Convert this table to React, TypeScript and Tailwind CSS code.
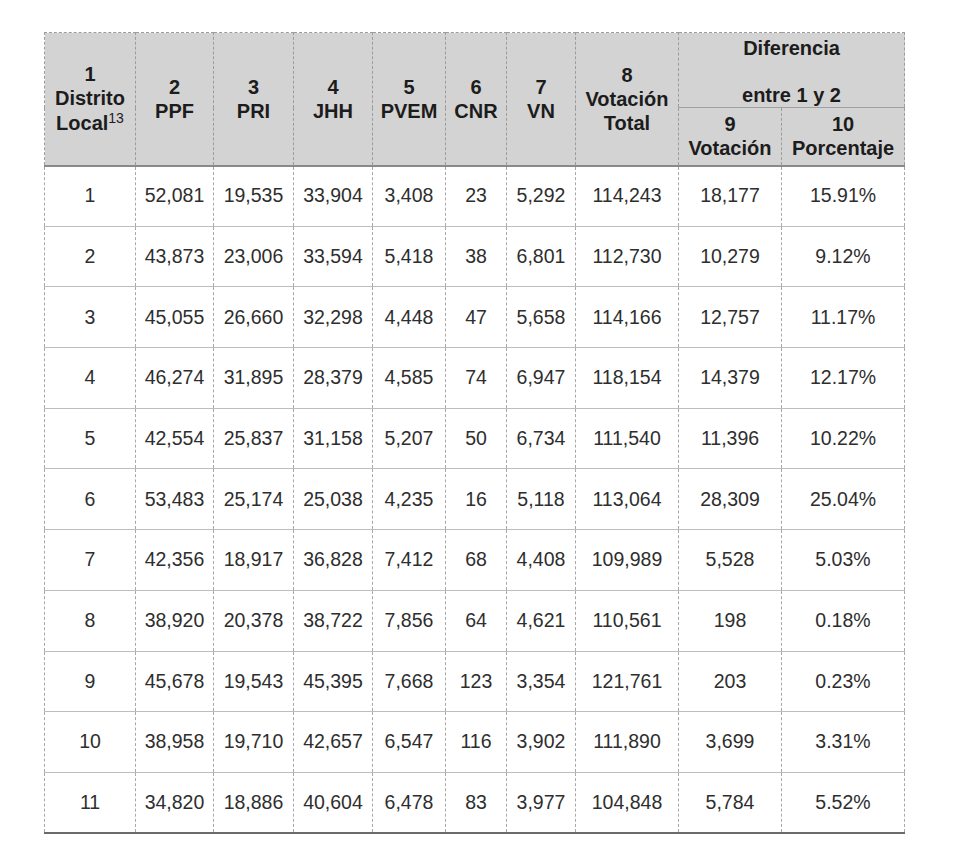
import React from 'react';

const rows: string[][] = [
  ['1', '52,081', '19,535', '33,904', '3,408', '23', '5,292', '114,243', '18,177', '15.91%'],
  ['2', '43,873', '23,006', '33,594', '5,418', '38', '6,801', '112,730', '10,279', '9.12%'],
  ['3', '45,055', '26,660', '32,298', '4,448', '47', '5,658', '114,166', '12,757', '11.17%'],
  ['4', '46,274', '31,895', '28,379', '4,585', '74', '6,947', '118,154', '14,379', '12.17%'],
  ['5', '42,554', '25,837', '31,158', '5,207', '50', '6,734', '111,540', '11,396', '10.22%'],
  ['6', '53,483', '25,174', '25,038', '4,235', '16', '5,118', '113,064', '28,309', '25.04%'],
  ['7', '42,356', '18,917', '36,828', '7,412', '68', '4,408', '109,989', '5,528', '5.03%'],
  ['8', '38,920', '20,378', '38,722', '7,856', '64', '4,621', '110,561', '198', '0.18%'],
  ['9', '45,678', '19,543', '45,395', '7,668', '123', '3,354', '121,761', '203', '0.23%'],
  ['10', '38,958', '19,710', '42,657', '6,547', '116', '3,902', '111,890', '3,699', '3.31%'],
  ['11', '34,820', '18,886', '40,604', '6,478', '83', '3,977', '104,848', '5,784', '5.52%'],
];

const widths = [91, 78, 80, 79, 73, 61, 69, 103, 103, 123];

const headCell =
  'border border-dashed border-[#9c9c9c] [border-bottom-style:solid] border-b-2 border-b-[#8a8a8a] bg-[#d3d3d3] text-center align-middle p-0';

const App: React.FC = () => {
  return (
    <div className="min-h-[864px] bg-white pt-[32px] pl-[44px] font-['Liberation_Sans',Arial,sans-serif]">
      <table className="table-fixed border-collapse w-[860px]">
        <colgroup>
          {widths.map((w, i) => (
            <col key={i} style={{ width: w }} />
          ))}
        </colgroup>
        <thead className="text-[20px] font-bold text-[#1c1c1c] leading-[24px]">
          <tr className="h-[71px]">
            <th rowSpan={2} className={headCell}>
              <div>1</div>
              <div>Distrito</div>
              <div>
                Local<sup className="text-[14px] font-normal relative top-[1px] align-super leading-none">13</sup>
              </div>
            </th>
            <th rowSpan={2} className={headCell}>
              <div>2</div>
              <div>PPF</div>
            </th>
            <th rowSpan={2} className={headCell}>
              <div>3</div>
              <div>PRI</div>
            </th>
            <th rowSpan={2} className={headCell}>
              <div>4</div>
              <div>JHH</div>
            </th>
            <th rowSpan={2} className={headCell}>
              <div>5</div>
              <div>PVEM</div>
            </th>
            <th rowSpan={2} className={headCell}>
              <div>6</div>
              <div>CNR</div>
            </th>
            <th rowSpan={2} className={headCell}>
              <div>7</div>
              <div>VN</div>
            </th>
            <th rowSpan={2} className={headCell}>
              <div>8</div>
              <div>Votación</div>
              <div>Total</div>
            </th>
            <th
              colSpan={2}
              className="border border-dashed border-[#9c9c9c] [border-bottom-style:solid] border-b-[#a0a0a0] bg-[#d3d3d3] text-center align-top p-0"
            >
              <div className="flex flex-col items-center pt-[3px] gap-[23px]">
                <div>Diferencia</div>
                <div>entre 1 y 2</div>
              </div>
            </th>
          </tr>
          <tr className="h-[58px]">
            <th className={headCell}>
              <div>9</div>
              <div>Votación</div>
            </th>
            <th className={headCell}>
              <div>10</div>
              <div>Porcentaje</div>
            </th>
          </tr>
        </thead>
        <tbody className="text-[19.5px] text-[#2e2e2e]">
          {rows.map((r, ri) => (
            <tr key={ri} className="h-[60.7px]">
              {r.map((c, ci) => (
                <td
                  key={ci}
                  className={
                    'border border-dashed border-[#a8a8a8] [border-bottom-style:solid] text-center align-middle p-0 ' +
                    (ri === rows.length - 1 ? 'border-b-2 border-b-[#6a6a6a]' : 'border-b-[#bdbdbd]')
                  }
                >
                  {c}
                </td>
              ))}
            </tr>
          ))}
        </tbody>
      </table>
    </div>
  );
};

export default App;
